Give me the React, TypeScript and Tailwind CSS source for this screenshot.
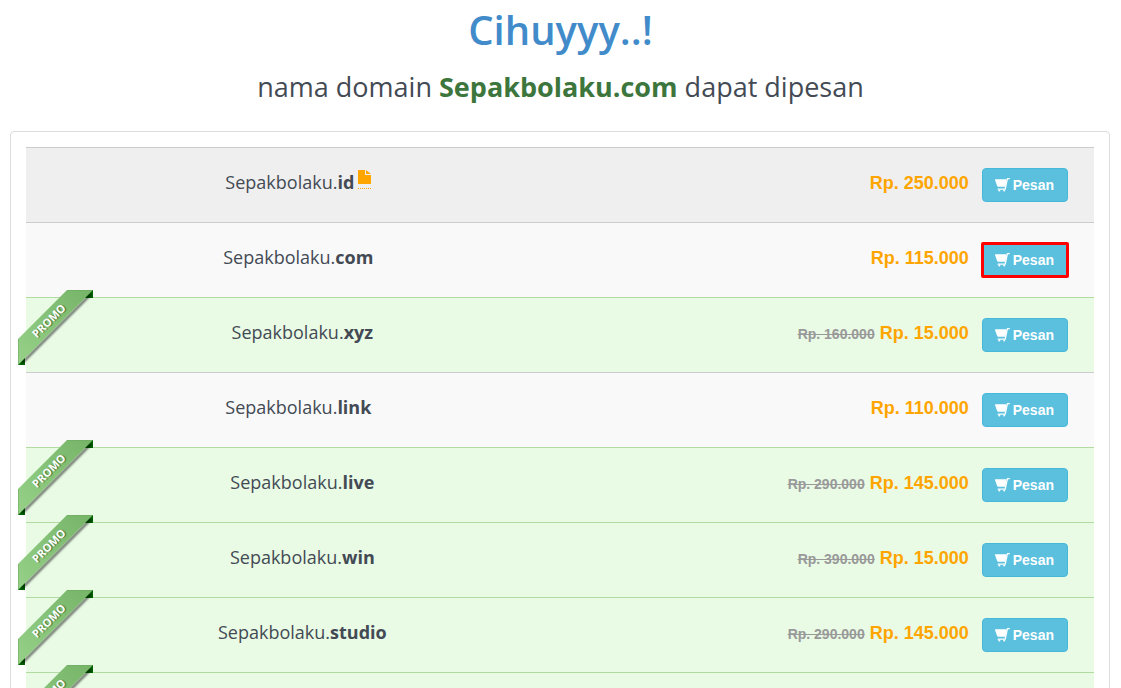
import React from 'react';

interface Domain {
  name?: string;
  ext?: string;
  price?: string;
  oldPrice?: string;
  promo?: boolean;
  note?: boolean;
  selected?: boolean;
}

const domains: Domain[] = [
  { name: 'Sepakbolaku', ext: 'id', price: 'Rp. 250.000', note: true },
  { name: 'Sepakbolaku', ext: 'com', price: 'Rp. 115.000', selected: true },
  { name: 'Sepakbolaku', ext: 'xyz', price: 'Rp. 15.000', oldPrice: 'Rp. 160.000', promo: true },
  { name: 'Sepakbolaku', ext: 'link', price: 'Rp. 110.000' },
  { name: 'Sepakbolaku', ext: 'live', price: 'Rp. 145.000', oldPrice: 'Rp. 290.000', promo: true },
  { name: 'Sepakbolaku', ext: 'win', price: 'Rp. 15.000', oldPrice: 'Rp. 390.000', promo: true },
  { name: 'Sepakbolaku', ext: 'studio', price: 'Rp. 145.000', oldPrice: 'Rp. 290.000', promo: true },
  { promo: true },
];

const getRowClass = (domain: Domain) => {
  if (domain.promo) {
    return 'bg-[#e9fbe5] border-[#b2dba1]';
  }
  return domain.note ? 'bg-[#efefef] border-[#cccccc]' : 'bg-[#f9f9f9] border-[#cccccc]';
};

const CartIcon = () => (
  <svg width="15" height="14" viewBox="0 0 15 14" fill="currentColor" aria-hidden="true">
    <path d="M.4 1.3H11.6L10.4 8.8H3.2Q2.5 8.8 2.2 8.1L0 2Q-.1 1.3.4 1.3z" />
    <path d="M14.3.7H12.4L10.2 11.2H3.2" fill="none" stroke="currentColor" strokeWidth="1.3" strokeLinecap="round" strokeLinejoin="round" />
    <circle cx="4.3" cy="12.6" r="1" />
    <circle cx="9.2" cy="12.6" r="1" />
  </svg>
);

const NoteIcon = () => (
  <svg width="13" height="14" viewBox="0 0 13 14" fill="currentColor" aria-hidden="true">
    <path d="M.5 0H7v4.5q0 .5.5.5H13v8.5q0 .5-.5.5H.5q-.5 0-.5-.5V.5Q0 0 .5 0z" />
    <path d="M8 0l5 4H8.5Q8 4 8 3.5z" />
  </svg>
);

const Ribbon = () => (
  <div className="absolute -left-2 -top-2 h-[75px] w-[75px]">
    <svg width="78" height="78" viewBox="0 0 78 78" className="absolute left-0 top-0" aria-hidden="true">
      <defs>
        <linearGradient id="ribbon" x1="0" y1="1" x2="1" y2="0">
          <stop offset="0" stopColor="#96d187" />
          <stop offset="1" stopColor="#76b468" />
        </linearGradient>
        <filter id="shade" x="-10%" y="-10%" width="120%" height="120%">
          <feGaussianBlur stdDeviation="1" />
        </filter>
        <clipPath id="corner">
          <path d="M0 0H75V75H0z" />
        </clipPath>
      </defs>
      <g clipPath="url(#corner)">
        <path d="M67 0H75V8H67zM0 67H7V75H0z" fill="#006400" />
        <path d="M73 4L4 73" stroke="#000000" strokeOpacity="0.7" strokeWidth="2" filter="url(#shade)" />
        <path d="M49 0H75L0 75V49z" fill="url(#ribbon)" />
        <path d="M49 .5H74M.5 49V74" stroke="#6aa85d" strokeOpacity="0.5" />
      </g>
    </svg>
    <span className="absolute left-0 top-0 flex h-[61px] w-[61px] -rotate-45 items-center justify-center text-[11px] font-bold text-white [text-shadow:1px_1px_1px_#4a7a40]">
      PROMO
    </span>
  </div>
);

const App: React.FC = () => {
  return (
    <div className="h-screen overflow-hidden bg-white px-[10px] font-['Open_Sans',sans-serif] text-[#434a54]">
      {/* Heading */}
      <div className="pt-2 text-center">
        <h1 className="text-[40px] font-semibold leading-[44px] text-[#428bca]">Cihuyyy..!</h1>
        <p className="mt-4 text-[27px] leading-[38px]">
          nama domain <b className="text-[#3c763d]">Sepakbolaku.com</b> dapat dipesan
        </p>
      </div>

      {/* Domain list */}
      <div className="mr-[1px] mt-[25px] rounded border border-[#dddddd] p-[15px]">
        <table className="w-full border-collapse">
          <tbody>
            {domains.map((domain, index) => (
              <tr key={index} className={`h-[75px] border-t ${getRowClass(domain)}`}>
                <td className={`relative w-[51%] pt-[21px] text-center align-top text-[18px] leading-[26px] ${domain.promo ? 'pl-2' : ''}`}>
                  {domain.promo && <Ribbon />}
                  {domain.name && (
                    <>
                      {domain.name}.<b>{domain.ext}</b>
                    </>
                  )}
                  {domain.note && (
                    <a href="#" aria-label="Info" className="ml-1 inline-block border-b border-dotted border-[#ffa500] pb-1 text-[#ffa500]">
                      <NoteIcon />
                    </a>
                  )}
                </td>
                <td className="pr-[26px] pt-5 align-top font-['Liberation_Sans',sans-serif] font-bold">
                  {domain.price && (
                    <div className="flex items-start justify-end">
                      {domain.oldPrice && (
                        <s className="mr-[5px] text-[14px] leading-[32px] text-[#999999]">{domain.oldPrice}</s>
                      )}
                      <span className="text-[18px] leading-[30px] text-[#ffa500]">{domain.price}</span>
                      <button
                        type="button"
                        className={`ml-[13px] flex h-[34px] items-center gap-[3px] border border-[#46b8da] bg-[#5bc0de] pl-3 pr-[13px] text-[14px] text-white ${
                          domain.selected ? 'rounded-[1px] outline-3 -outline-offset-2 outline-[#ff0000]' : 'rounded'
                        }`}
                      >
                        <CartIcon />
                        Pesan
                      </button>
                    </div>
                  )}
                </td>
              </tr>
            ))}
          </tbody>
        </table>
      </div>
    </div>
  );
};

export default App;
